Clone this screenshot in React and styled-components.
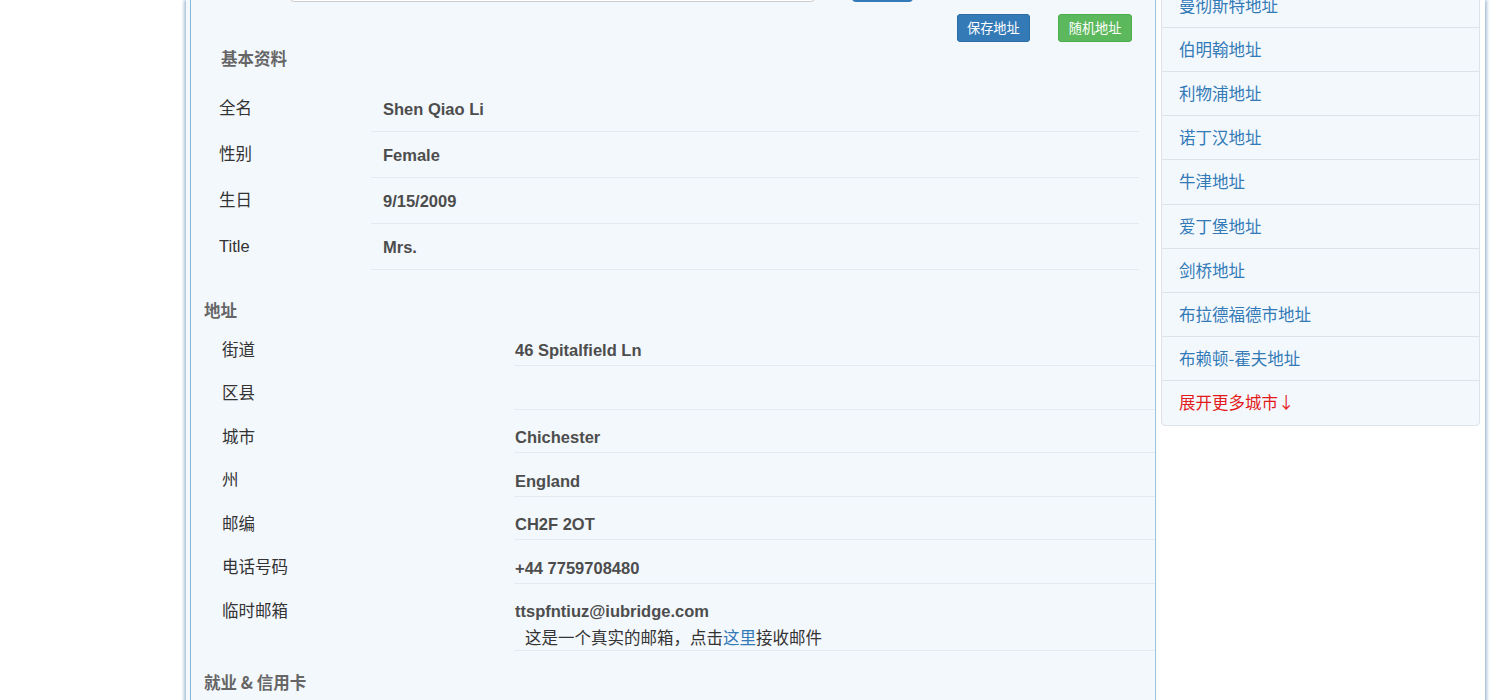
import React from "react";
import styled, { createGlobalStyle } from "styled-components";

const GlobalStyle = createGlobalStyle`
  body {
    margin: 0;
    background: #ffffff;
    font-family: "Liberation Sans", "Noto Sans CJK SC", sans-serif;
    font-size: 16.5px;
    color: #333;
    overflow: hidden;
  }
`;

const Page = styled.div`
  height: 700px;
  overflow: hidden;
  padding-left: 186px;
`;

const Frame = styled.div`
  display: flex;
  align-items: flex-start;
  width: 1299px;
  min-height: 760px;
  background: #fff;
  box-shadow: -2px 0 3px #a9c1d6, 2px 0 3px #a9c1d6;
`;

const MainCol = styled.div`
  display: flow-root;
  width: 970px;
  min-height: 760px;
  padding-left: 4px;
  box-sizing: border-box;
  background: #f3f8fd;
`;

const Panel = styled.div`
  display: flow-root;
  min-height: 760px;
  border-left: 1px solid #86b9d9;
  border-right: 1px solid #9cc4e0;
  background: #f3f8fd;
`;

const TopRow = styled.div`
  display: flex;
  gap: 37px;
  height: 34px;
  margin-top: -32px;
  padding-left: 99px;
`;

const SearchInput = styled.div`
  width: 525px;
  height: 34px;
  box-sizing: border-box;
  border: 1px solid #ccc;
  border-radius: 4px;
  background: #fff;
`;

const SearchButton = styled.div`
  width: 61px;
  height: 34px;
  border-radius: 4px;
  background: #337ab7;
`;

const ButtonRow = styled.div`
  display: flex;
  justify-content: flex-end;
  gap: 28px;
  padding: 12px 23px 0 0;
`;

const Button = styled.button`
  font-family: "Noto Sans CJK SC", sans-serif;
  font-size: 13.2px;
  line-height: 16px;
  padding: 5px 9.5px;
  border-radius: 3px;
  color: #fff;
  border: 1px solid ${(p) => (p.$green ? "#4cae4c" : "#2e6da4")};
  background: ${(p) => (p.$green ? "#5cb85c" : "#337ab7")};
`;

const Heading = styled.h3`
  margin: ${(p) => p.$mt}px 0 ${(p) => p.$mb}px ${(p) => p.$indent}px;
  font-family: "Noto Sans CJK SC", sans-serif;
  font-size: 16.5px;
  line-height: 22px;
  font-weight: bold;
  color: #666;
`;

const Table = styled.div`
  display: grid;
  grid-template-columns: ${(p) => p.$labelWidth}px 1fr;
  margin-left: ${(p) => p.$left}px;
  margin-right: ${(p) => p.$right}px;
`;

const Label = styled.div`
  padding: ${(p) => p.$pad};
  padding-left: ${(p) => p.$indent}px;
  line-height: 21px;
  color: #333;
  font-family: "Liberation Sans", "Noto Sans CJK SC", sans-serif;
`;

const Value = styled.div`
  padding: ${(p) => p.$pad};
  padding-left: ${(p) => p.$indent}px;
  min-height: 21px;
  line-height: 21px;
  border-bottom: 1px solid #e4eaf0;
  font-weight: bold;
  color: #4d4d4d;
`;

const Note = styled.div`
  margin-top: 3px;
  padding-left: 10px;
  line-height: 24px;
  font-weight: normal;
  color: #333;
  font-family: "Noto Sans CJK SC", sans-serif;

  a {
    color: #337ab7;
    text-decoration: none;
  }
`;

const Sidebar = styled.ul`
  list-style: none;
  width: 319px;
  margin: -17.5px 0 0 5px;
  padding: 0;
`;

const CityItem = styled.li`
  padding: 10px 17px;
  line-height: 23.2px;
  margin-bottom: -1px;
  border: 1px solid #dfe2e8;
  background: #f3f8fd;
  font-family: "Noto Sans CJK SC", sans-serif;
  font-size: 16.5px;
  color: ${(p) => (p.$more ? "#e31a1a" : "#337ab7")};

  &:last-child {
    border-radius: 0 0 4px 4px;
    margin-bottom: 0;
  }
`;

const basic = [
  ["全名", "Shen Qiao Li"],
  ["性别", "Female"],
  ["生日", "9/15/2009"],
  ["Title", "Mrs."],
];

const address = [
  ["街道", "46 Spitalfield Ln"],
  ["区县", ""],
  ["城市", "Chichester"],
  ["州", "England"],
  ["邮编", "CH2F 2OT"],
  ["电话号码", "+44 7759708480"],
];

const cities = [
  "曼彻斯特地址",
  "伯明翰地址",
  "利物浦地址",
  "诺丁汉地址",
  "牛津地址",
  "爱丁堡地址",
  "剑桥地址",
  "布拉德福德市地址",
  "布赖顿-霍夫地址",
];

function App() {
  return (
    <Page>
      <GlobalStyle />
      <Frame>
        <MainCol>
          <Panel>
            <TopRow>
              <SearchInput />
              <SearchButton />
            </TopRow>
            <ButtonRow>
              <Button>保存地址</Button>
              <Button $green>随机地址</Button>
            </ButtonRow>

            <Heading $mt={5} $mb={17} $indent={30}>基本资料</Heading>
            <Table $labelWidth={166} $left={14} $right={16}>
              {basic.map(([k, v]) => (
                <React.Fragment key={k}>
                  <Label $pad="11.5px 0 12.5px" $indent={14}>{k}</Label>
                  <Value $pad="12.5px 0 11.5px" $indent={12}>{v}</Value>
                </React.Fragment>
              ))}
            </Table>

            <Heading $mt={29} $mb={1.5} $indent={13}>地址</Heading>
            <Table $labelWidth={310} $left={13} $right={0}>
              {address.map(([k, v]) => (
                <React.Fragment key={k}>
                  <Label $pad="17px 0 4.5px" $indent={18}>{k}</Label>
                  <Value $pad="17.5px 0 4px" $indent={1}>{v}</Value>
                </React.Fragment>
              ))}
              <Label $pad="17px 0 4.5px" $indent={18}>临时邮箱</Label>
              <Value $pad="17px 0 1px" $indent={1}>
                ttspfntiuz@iubridge.com
                <Note>
                  这是一个真实的邮箱，点击<a href="#">这里</a>接收邮件
                </Note>
              </Value>
            </Table>

            <Heading $mt={20} $mb={0} $indent={13}>就业 &amp; 信用卡</Heading>
          </Panel>
        </MainCol>

        <Sidebar>
          {cities.map((c) => (
            <CityItem key={c}>{c}</CityItem>
          ))}
          <CityItem $more>展开更多城市↓</CityItem>
        </Sidebar>
      </Frame>
    </Page>
  );
}

export default App;
